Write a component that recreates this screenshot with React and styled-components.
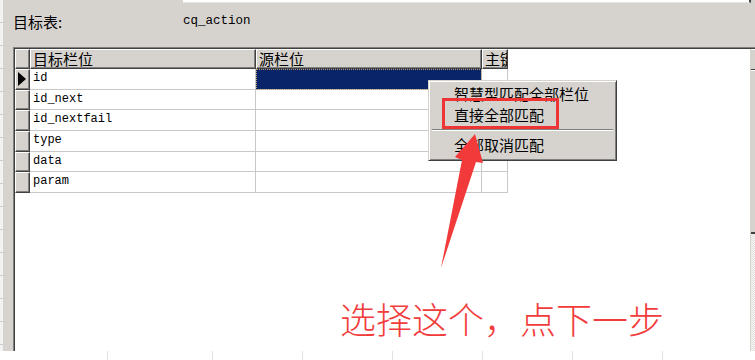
import React from 'react';
import styled, { createGlobalStyle } from 'styled-components';

const GlobalStyle = createGlobalStyle`
  html, body {
    margin: 0;
    padding: 0;
    background: #fff;
  }
  body {
    font-family: "Noto Sans CJK SC", sans-serif;
  }
`;

const Screen = styled.div`
  position: relative;
  width: 755px;
  height: 360px;
  overflow: hidden;
  display: flex;
  flex-direction: column;
`;

const Main = styled.div`
  display: flex;
  height: 351px;
`;

const SheetEdge = styled.div`
  width: 3px;
  background: repeating-linear-gradient(
    to bottom,
    #f1f3f3 0,
    #f1f3f3 22px,
    #c9cdcd 22px,
    #c9cdcd 23px
  );
`;

const Dialog = styled.div`
  flex: 1;
  min-width: 0;
  background: #d6d3ce;
  display: flex;
  flex-direction: column;
  padding-left: 10px;
`;

const TopBox = styled.div`
  margin-left: 170px;
  margin-right: 4px;
  height: 2px;
  background: #fff;
  border-bottom: 1px solid #e6e4e0;
  border-right: 2px solid #404040;
`;

const TargetRow = styled.div`
  display: flex;
  align-items: center;
  height: 36px;
  margin-bottom: 8px;
  color: #000;
`;

const TargetLabel = styled.span`
  width: 170px;
  font-size: 15px;
`;

const TargetValue = styled.span`
  font-family: "Liberation Mono", monospace;
  font-size: 12.5px;
`;

const GridPanel = styled.div`
  flex: 1;
  display: flex;
  background: #fff;
  border-top: 1px solid #808080;
  border-left: 1px solid #808080;
  box-shadow: inset 1px 1px 0 #404040;
  padding: 1px 0 0 1px;
`;

const Table = styled.div`
  flex: 1;
  align-self: flex-start;
  display: grid;
  grid-template-columns: 15px 226px 226px 26px;
  grid-template-rows: 20px repeat(6, 20.7px);
`;

const HeaderCell = styled.div`
  box-sizing: border-box;
  background: #d6d3ce;
  border-top: 1px solid #fff;
  border-left: 1px solid #fff;
  border-right: 1px solid #404040;
  border-bottom: 1px solid #404040;
  box-shadow: inset -1px -1px 0 #808080;
  font-size: 15px;
  line-height: 18px;
  padding-left: 2px;
  white-space: nowrap;
  overflow: hidden;
  color: #000;
`;

const IndicatorCell = styled.div`
  box-sizing: border-box;
  background: #d6d3ce;
  border-top: 1px solid #fff;
  border-left: 1px solid #fff;
  border-right: 1px solid #404040;
  border-bottom: 1px solid #404040;
  box-shadow: inset -1px -1px 0 #808080;
  display: flex;
  align-items: center;
  padding-left: 2px;
`;

const RowPointer = styled.span`
  width: 0;
  height: 0;
  border-top: 7px solid transparent;
  border-bottom: 7px solid transparent;
  border-left: 8px solid #000;
`;

const Cell = styled.div`
  box-sizing: border-box;
  background: ${(p) => (p.$selected ? '#0a246a' : '#fff')};
  border-right: 1px solid #c8c8c8;
  border-bottom: 1px solid #c8c8c8;
  outline: ${(p) => (p.$selected ? '1px dotted #b8a070' : 'none')};
  outline-offset: -1px;
  font-family: "Liberation Mono", monospace;
  font-size: 12px;
  line-height: 19px;
  padding-left: 3px;
  color: #000;
  white-space: nowrap;
  overflow: hidden;
`;

const ScrollBar = styled.div`
  width: 4px;
  display: flex;
  flex-direction: column;
  border-left: 1px solid #d6d3ce;
`;

const ScrollButton = styled.div`
  height: 19px;
  background: #d6d3ce;
  border-top: 1px solid #fff;
  border-bottom: 1px solid #404040;
`;

const ScrollThumb = styled.div`
  height: 161px;
  background: #d6d3ce;
  border-top: 1px solid #fff;
  border-bottom: 2px solid #404040;
`;

const ScrollTrack = styled.div`
  flex: 1;
  background-color: #f4f3f1;
  background-image: repeating-conic-gradient(#e2e0dc 0 25%, #f7f6f4 0 50%);
  background-size: 2px 2px;
`;

const BottomStrip = styled.div`
  flex: 1;
  display: flex;
  background: #fff;
`;

const BottomCell = styled.div`
  width: ${(p) => p.$w}px;
  border-right: 1px solid #e2e2e2;
  box-sizing: border-box;
`;

const Menu = styled.div`
  position: absolute;
  left: 428px;
  top: 80px;
  width: 189px;
  height: 81px;
  box-sizing: border-box;
  background: #d6d3ce;
  border: 1px solid;
  border-color: #d6d3ce #404040 #404040 #d6d3ce;
  box-shadow: inset 1px 1px 0 #fff, inset -1px -1px 0 #808080;
  padding: 2px 2px;
`;

const MenuItem = styled.div`
  height: 21px;
  line-height: 21px;
  padding-left: 23px;
  font-size: 15px;
  color: #000;
  white-space: nowrap;
`;

const MenuSeparator = styled.div`
  margin: 4px 1px 3px;
  border-top: 1px solid #808080;
  border-bottom: 1px solid #fff;
`;

const RedBox = styled.div`
  position: absolute;
  left: 442px;
  top: 98px;
  width: 117px;
  height: 31px;
  box-sizing: border-box;
  border: 3px solid #ee3434;
`;

const Arrow = styled.svg`
  position: absolute;
  left: 436px;
  top: 130px;
`;

const Note = styled.div`
  position: absolute;
  left: 340px;
  top: 300px;
  font-size: 36px;
  line-height: 36px;
  font-weight: 300;
  color: #f23c3c;
  white-space: nowrap;
`;

const fields = ['id', 'id_next', 'id_nextfail', 'type', 'data', 'param'];
const bottomCells = [108, 105, 90, 90, 90, 90, 90];

export default function App() {
  return (
    <>
      <GlobalStyle />
      <Screen>
        <Main>
          <SheetEdge />
          <Dialog>
            <TopBox />
            <TargetRow>
              <TargetLabel>目标表:</TargetLabel>
              <TargetValue>cq_action</TargetValue>
            </TargetRow>
            <GridPanel>
              <Table>
                <HeaderCell />
                <HeaderCell>目标栏位</HeaderCell>
                <HeaderCell>源栏位</HeaderCell>
                <HeaderCell>主键</HeaderCell>
                {fields.map((f, i) => (
                  <React.Fragment key={f}>
                    <IndicatorCell>{i === 0 && <RowPointer />}</IndicatorCell>
                    <Cell>{f}</Cell>
                    <Cell $selected={i === 0} />
                    <Cell />
                  </React.Fragment>
                ))}
              </Table>
              <ScrollBar>
                <ScrollButton />
                <ScrollThumb />
                <ScrollTrack />
              </ScrollBar>
            </GridPanel>
          </Dialog>
        </Main>
        <BottomStrip>
          {bottomCells.map((w, i) => (
            <BottomCell key={i} $w={w} />
          ))}
        </BottomStrip>

        <Menu>
          <MenuItem>智慧型匹配全部栏位</MenuItem>
          <MenuItem>直接全部匹配</MenuItem>
          <MenuSeparator />
          <MenuItem>全部取消匹配</MenuItem>
        </Menu>
        <RedBox />
        <Arrow width="52" height="142" viewBox="0 0 52 142">
          <polygon
            points="39,4 47,33 40,32 5,138 26,30 19,27"
            fill="#f23a3a"
          />
        </Arrow>
        <Note>选择这个，点下一步</Note>
      </Screen>
    </>
  );
}
